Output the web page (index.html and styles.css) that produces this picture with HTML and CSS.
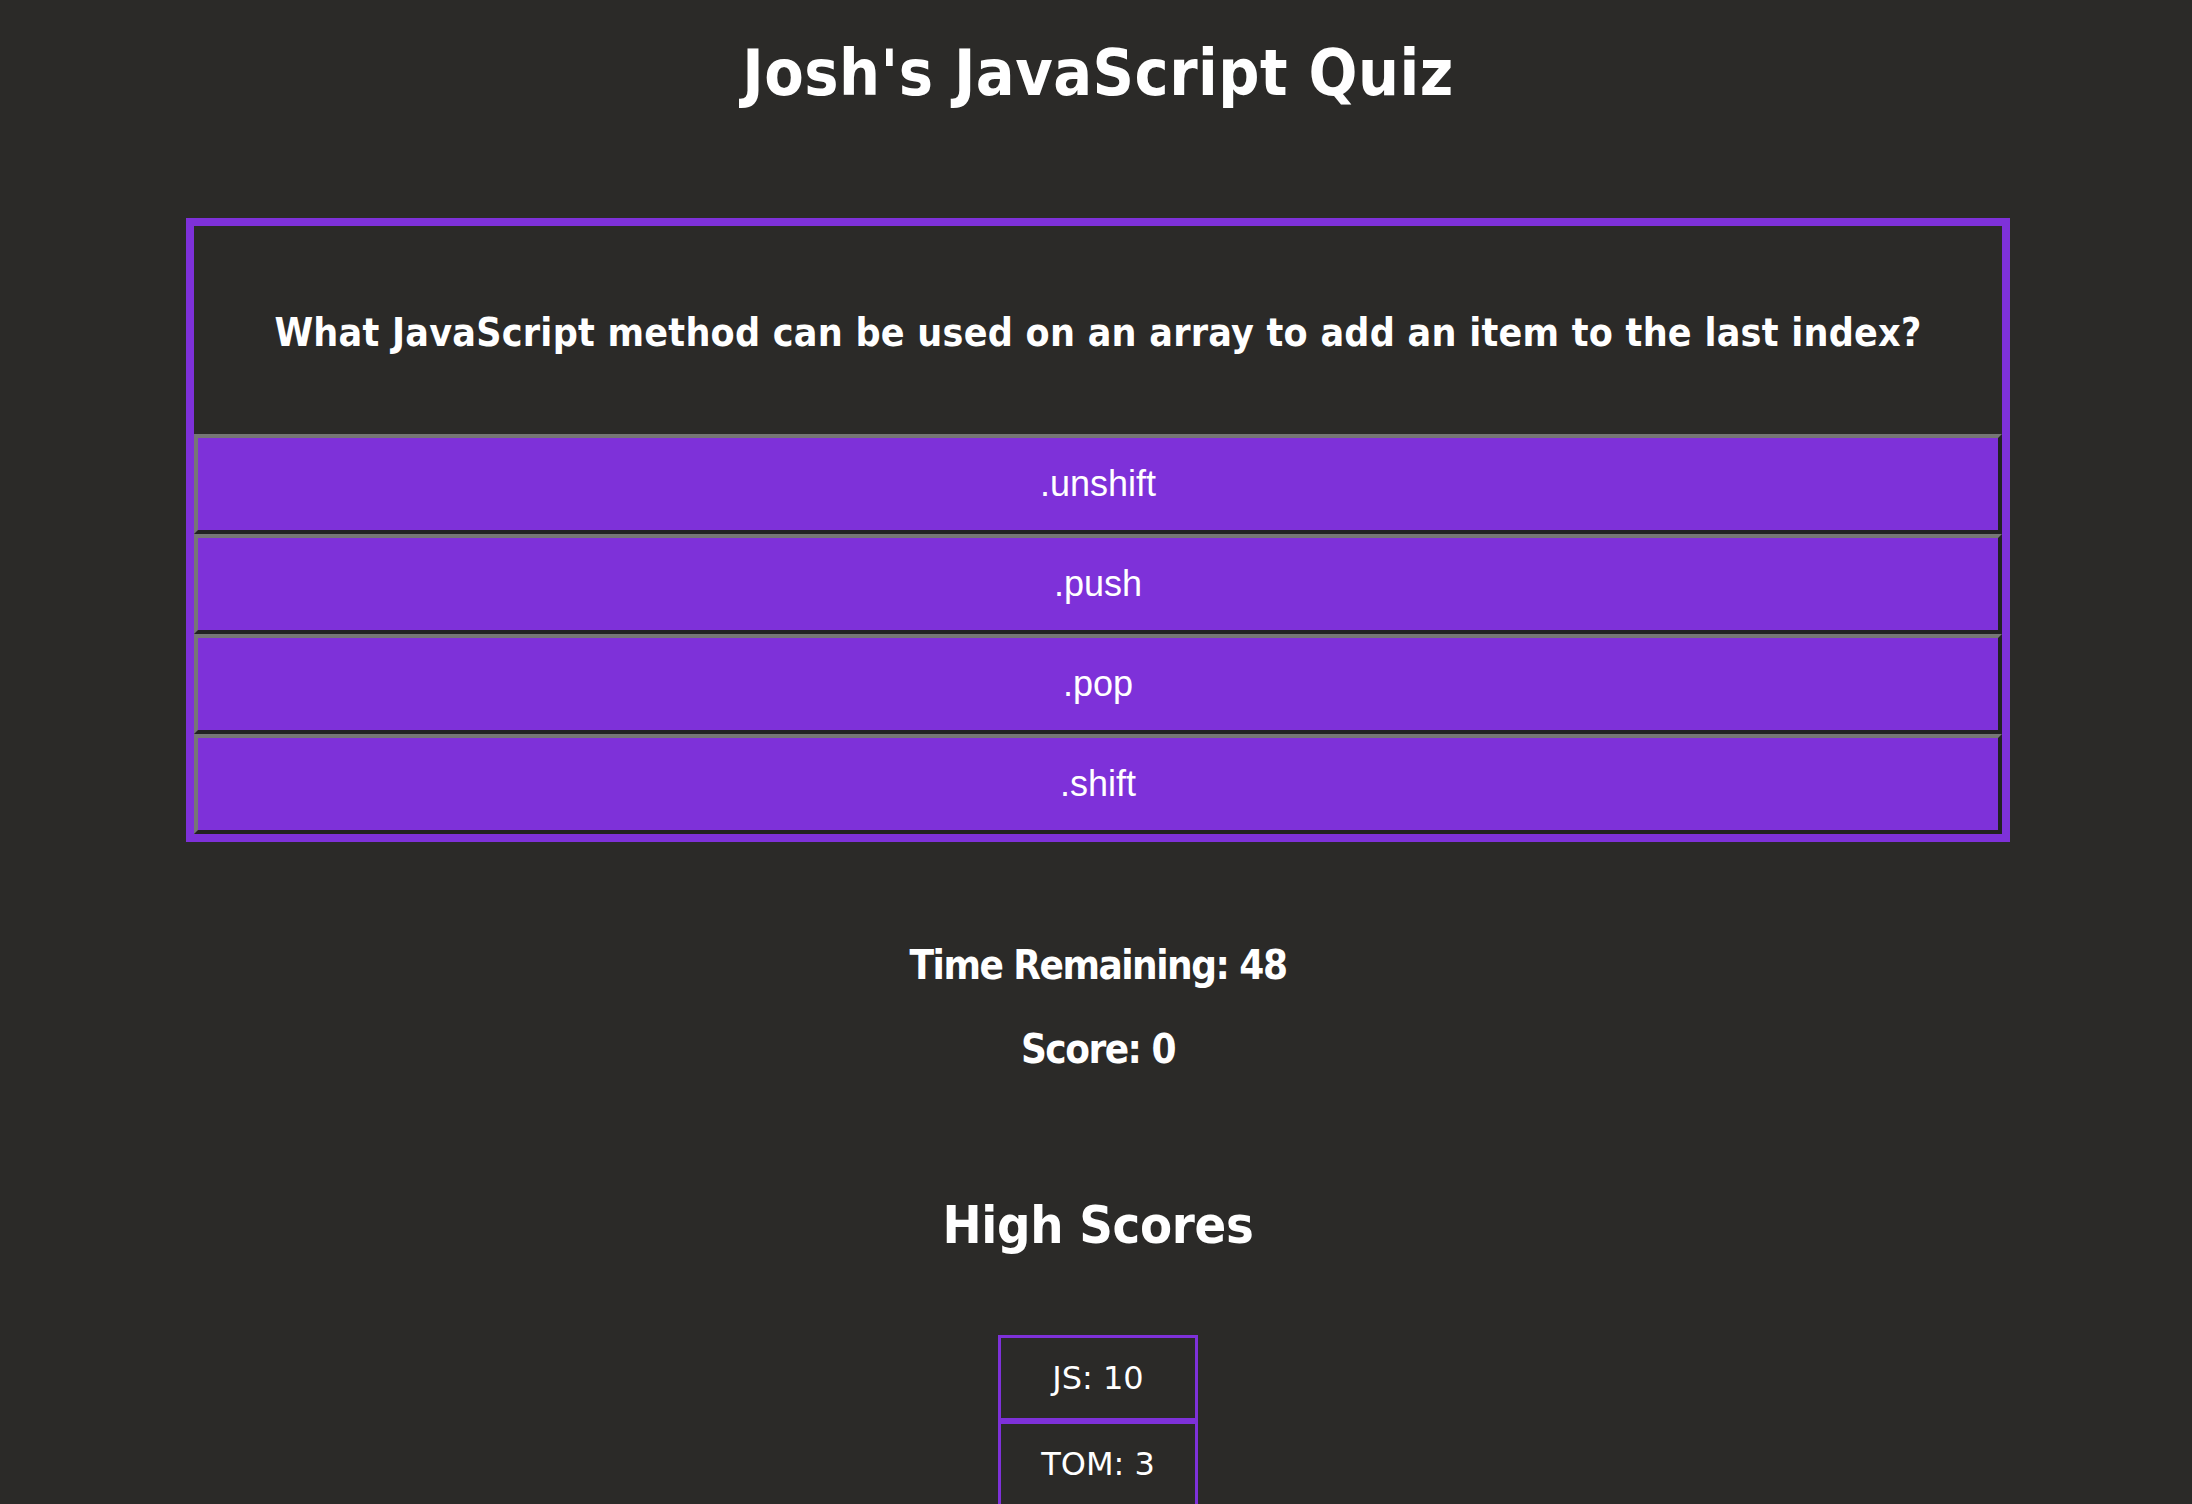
FILE: index.html
```html
<!DOCTYPE html>
<html lang="en">
<head>
<meta charset="utf-8">
<title>Josh's JavaScript Quiz</title>
<link rel="stylesheet" href="styles.css">
</head>
<body>
  <h1 class="title">Josh's JavaScript Quiz</h1>

  <main class="quiz">
    <div class="question-area">
      <h3 class="question">What JavaScript method can be used on an array to add an item to the last index?</h3>
    </div>
    <div class="answers">
      <button class="answer">.unshift</button>
      <button class="answer">.push</button>
      <button class="answer">.pop</button>
      <button class="answer">.shift</button>
    </div>
  </main>

  <section class="status">
    <p class="stat stat-time">Time Remaining: 48</p>
    <p class="stat stat-score">Score: 0</p>
  </section>

  <section class="scores">
    <h2 class="scores-title">High Scores</h2>
    <ul class="score-list">
      <li class="score-item">JS: 10</li>
      <li class="score-item">TOM: 3</li>
    </ul>
  </section>
</body>
</html>
```

FILE: styles.css
```css
html {
  background: #2b2a28;
}

body {
  margin: 0 14px 0 18px;
  background: #2b2a28;
  color: #ffffff;
  font-family: "DejaVu Sans Condensed", "DejaVu Sans", sans-serif;
  font-stretch: condensed;
  text-align: center;
}

.title {
  margin: 33px 0 0;
  font-size: 64px;
  line-height: 80px;
  letter-spacing: 0.5px;
  font-weight: bold;
}

.quiz {
  box-sizing: border-box;
  width: 1824px;
  margin: 105px auto 0;
  border: 8px solid #7e31d9;
  display: flex;
  flex-direction: column;
}

.question-area {
  box-sizing: border-box;
  height: 208px;
  padding-top: 5px;
  display: flex;
  align-items: center;
  justify-content: center;
}

.question {
  margin: 0;
  font-size: 39px;
  line-height: 45px;
  letter-spacing: 0.25px;
  font-weight: bold;
}

.answers {
  display: flex;
  flex-direction: column;
}

.answer {
  box-sizing: border-box;
  display: block;
  width: 100%;
  height: 100px;
  margin: 0;
  padding: 0;
  border-style: solid;
  border-width: 4px;
  border-color: #767676 #222222 #222222 #767676;
  background: #7e31d9;
  color: #ffffff;
  font-family: "Liberation Sans", Arial, sans-serif;
  font-size: 36px;
  cursor: pointer;
}

.status {
  margin-top: 99px;
  display: flex;
  flex-direction: column;
  gap: 36px;
}

.stat {
  margin: 0;
  font-size: 40px;
  line-height: 48px;
  letter-spacing: -1.5px;
  font-weight: bold;
}

.scores {
  margin-top: 121px;
  display: flex;
  flex-direction: column;
  align-items: center;
}

.scores-title {
  margin: 0;
  font-size: 52px;
  line-height: 62px;
  letter-spacing: -0.3px;
  font-weight: bold;
}

.score-list {
  list-style: none;
  margin: 79px 0 0;
  padding: 0;
  width: 200px;
}

.score-item {
  box-sizing: border-box;
  height: 86px;
  border: 3px solid #7e31d9;
  padding: 21px 0;
  font-size: 32px;
  line-height: 38px;
  font-family: "DejaVu Sans", sans-serif;
  font-stretch: normal;
}
```
